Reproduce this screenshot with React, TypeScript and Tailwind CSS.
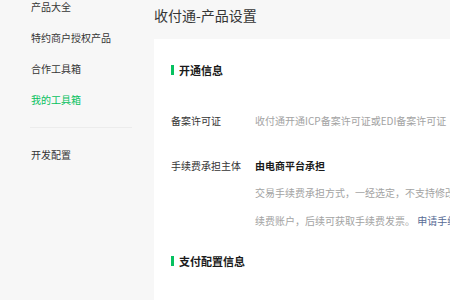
import React from "react";

const font = { fontFamily: '"Noto Sans CJK SC", "Noto Sans", sans-serif' };

export default function App() {
  return (
    <div className="flex w-[450px] h-[300px] overflow-hidden bg-[#f7f7f7]" style={font}>
      <aside className="w-[154px] shrink-0 flex flex-col pt-px pl-[31px] pr-[22px]">
        <div className="flex flex-col gap-[19px] text-[10px] leading-[12px] text-[#353535]">
          <div>产品大全</div>
          <div>特约商户授权产品</div>
          <div>合作工具箱</div>
          <div className="text-[#07c160]">我的工具箱</div>
        </div>
        <div className="mt-[21px] h-px bg-[#ececec] -ml-px" />
        <div className="mt-[21px] text-[10px] leading-[12px] text-[#353535]">开发配置</div>
      </aside>
      <main className="flex-1 min-w-0 flex flex-col">
        <div className="h-[39px] pt-[6px] text-[14px] leading-[18px] text-[#353535] whitespace-nowrap">
          收付通-产品设置
        </div>
        <div className="flex-1 bg-white pl-[17px] pt-[24px]">
          <div className="flex items-center gap-[5px] h-[14px]">
            <span className="w-[3px] h-[10px] bg-[#07c160]" />
            <span className="text-[11px] leading-[14px] font-bold text-[#1a1a1a]">开通信息</span>
          </div>
          <div className="mt-[38px] flex text-[10px] leading-[12px] whitespace-nowrap">
            <div className="w-[84px] shrink-0 text-[#353535]">备案许可证</div>
            <div className="text-[#a3a3a3]">收付通开通ICP备案许可证或EDI备案许可证</div>
          </div>
          <div className="mt-[33px] flex text-[10px] leading-[12px] whitespace-nowrap">
            <div className="w-[84px] shrink-0 text-[#353535]">手续费承担主体</div>
            <div className="flex flex-col">
              <div className="font-bold text-[#1a1a1a]">由电商平台承担</div>
              <div className="mt-[7px] leading-[28px] text-[#a3a3a3]">
                <div>交易手续费承担方式，一经选定，不支持修改。若选择由电商平台承担，需开通手</div>
                <div>
                  续费账户，后续可获取手续费发票。 <span className="text-[#576b95]">申请手续费账户</span>
                </div>
              </div>
            </div>
          </div>
          <div className="mt-[19px] flex items-center gap-[5px] h-[14px]">
            <span className="w-[3px] h-[10px] bg-[#07c160]" />
            <span className="text-[11px] leading-[14px] font-bold text-[#1a1a1a]">支付配置信息</span>
          </div>
        </div>
      </main>
    </div>
  );
}
